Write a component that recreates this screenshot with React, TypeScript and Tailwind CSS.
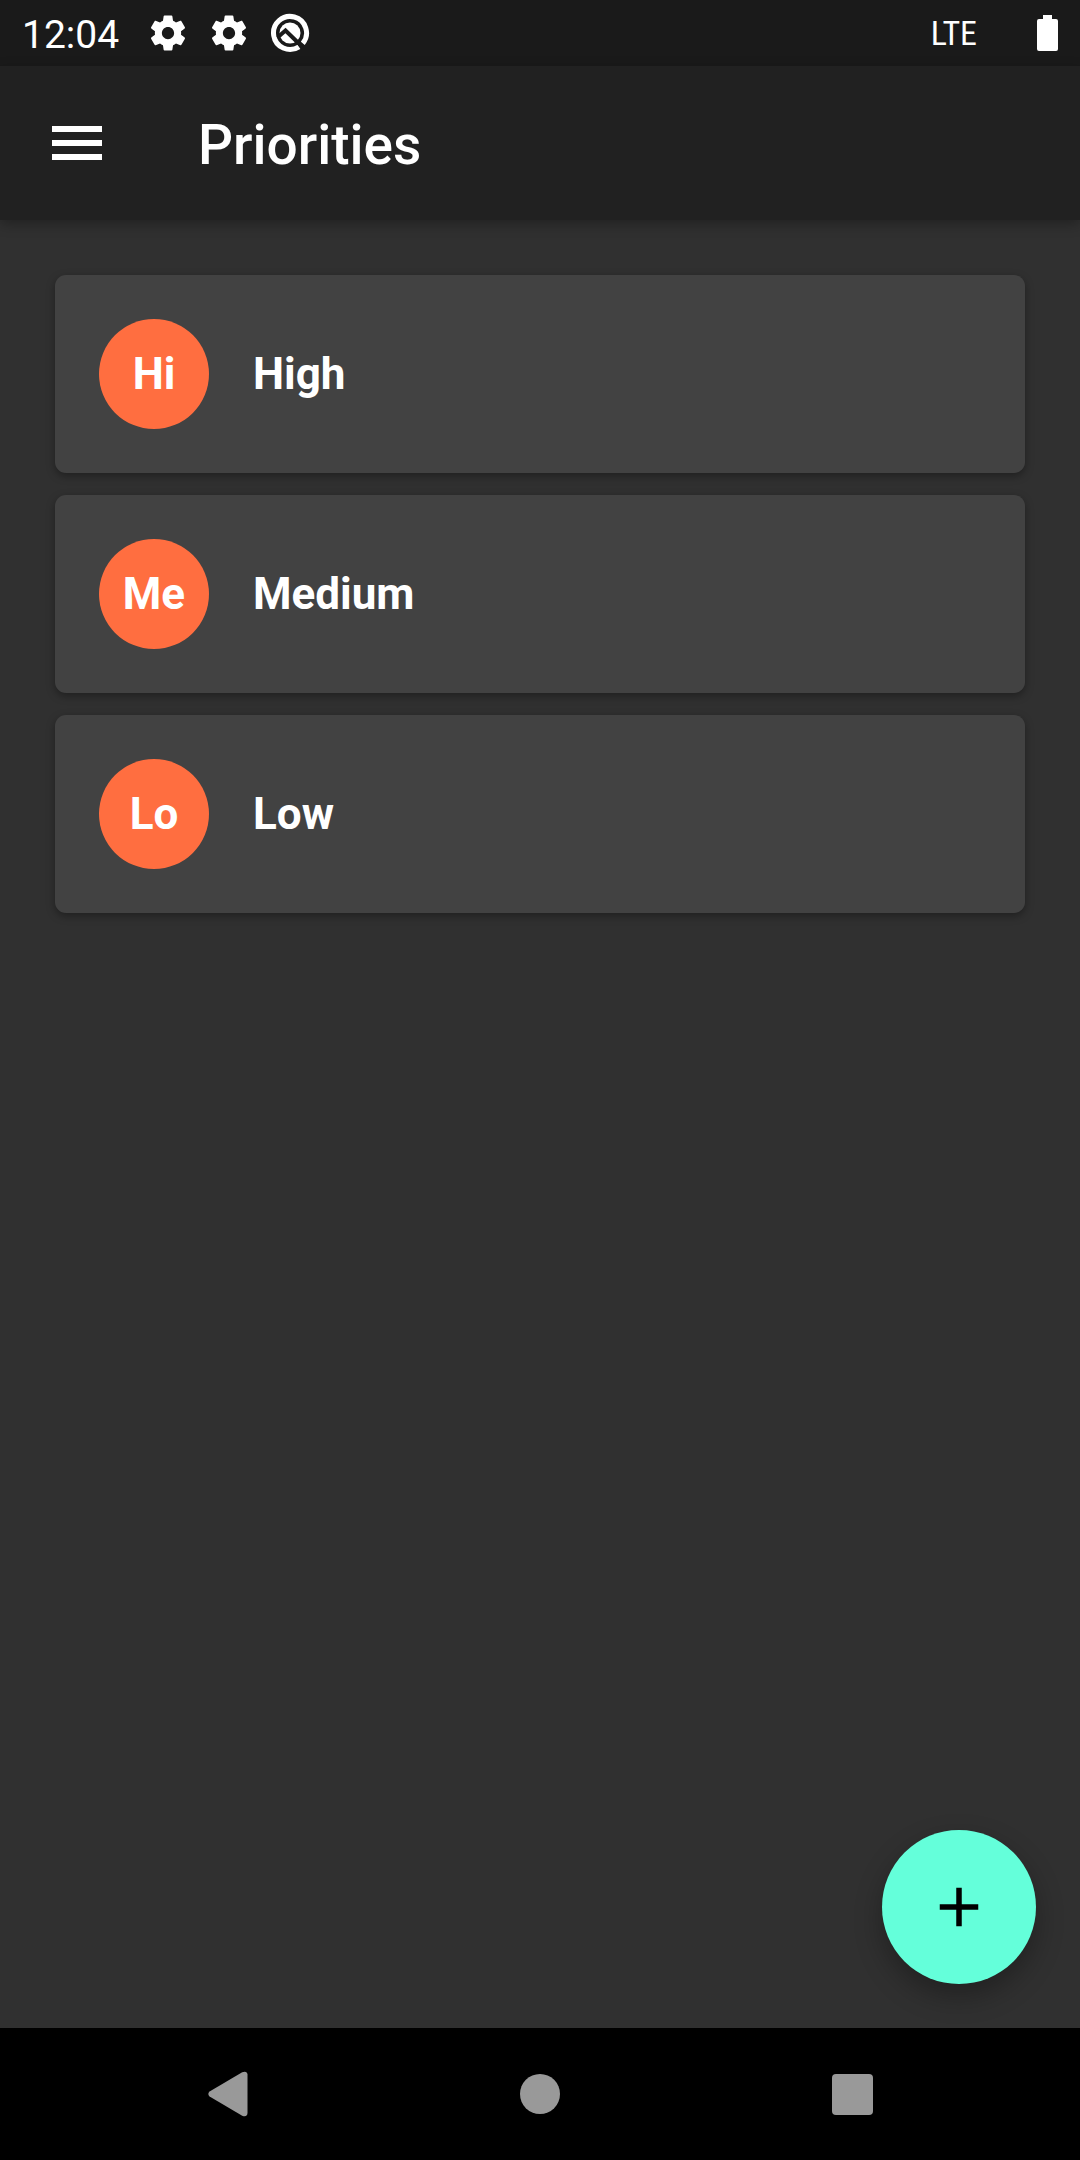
const GEAR =
  'M19.43 12.98c.04-.32.07-.64.07-.98s-.03-.66-.07-.98l2.11-1.65c.19-.15.24-.42.12-.64l-2-3.46c-.12-.22-.39-.3-.61-.22l-2.49 1c-.52-.4-1.08-.73-1.69-.98l-.38-2.65C14.46 2.18 14.25 2 14 2h-4c-.25 0-.46.18-.49.42l-.38 2.65c-.61.25-1.17.59-1.69.98l-2.49-1c-.23-.09-.49 0-.61.22l-2 3.46c-.13.22-.07.49.12.64l2.11 1.65c-.04.32-.07.65-.07.98s.03.66.07.98l-2.11 1.65c-.19.15-.24.42-.12.64l2 3.46c.12.22.39.3.61.22l2.49-1c.52.4 1.08.73 1.69.98l.38 2.65c.03.24.24.42.49.42h4c.25 0 .46-.18.49-.42l.38-2.65c.61-.25 1.17-.59 1.69-.98l2.49 1c.23.09.49 0 .61-.22l2-3.46c.12-.22.07-.49-.12-.64l-2.11-1.65zM12 15.5c-1.93 0-3.5-1.57-3.5-3.5s1.57-3.5 3.5-3.5 3.5 1.57 3.5 3.5-1.57 3.5-3.5 3.5z';

const priorities = [
  { short: 'Hi', name: 'High' },
  { short: 'Me', name: 'Medium' },
  { short: 'Lo', name: 'Low' },
];

function GearIcon() {
  return (
    <svg viewBox="0 0 24 24" className="size-[42px]" fill="currentColor" aria-hidden="true">
      <path d={GEAR} />
    </svg>
  );
}

function BadgeIcon() {
  return (
    <svg viewBox="0 0 42 42" className="size-[42px]" fill="none" aria-hidden="true">
      <path d="M30 34.8A16.5 16.5 0 1 1 33.8 31.4" stroke="currentColor" strokeWidth="5" />
      <circle cx="21" cy="21" r="10.5" fill="currentColor" />
      <path d="M8.5 25.5L16.5 18.5L34 35.5" stroke="#1a1a1a" strokeWidth="4" />
    </svg>
  );
}

function StatusBar() {
  return (
    <div className="flex h-[66px] shrink-0 items-center justify-between bg-[#1a1a1a] px-[22px]">
      <div className="flex items-center">
        <span className="w-[125px] pt-[3px] text-[39px] leading-[46px]">12:04</span>
        <div className="flex items-center gap-[19px]">
          <GearIcon />
          <GearIcon />
          <BadgeIcon />
        </div>
      </div>
      <div className="flex items-center gap-[60px]">
        <span className="font-['Roboto_Condensed','Liberation_Sans_Narrow',Roboto,sans-serif] text-[34px] leading-[40px]">
          LTE
        </span>
        <svg viewBox="0 0 21 36" className="h-[36px] w-[21px]" fill="currentColor" aria-hidden="true">
          <path d="M6 0h9v4h4a2 2 0 0 1 2 2v28a2 2 0 0 1-2 2H2a2 2 0 0 1-2-2V6a2 2 0 0 1 2-2h4z" />
        </svg>
      </div>
    </div>
  );
}

export default function App() {
  return (
    <div className="flex min-h-screen flex-col bg-[#303030] font-[Roboto,sans-serif] text-white">
      <StatusBar />
      <header className="flex h-[154px] shrink-0 items-center bg-[#212121] px-[44px] shadow-[0_4px_12px_rgba(0,0,0,0.3)]">
        <button type="button" aria-label="Open menu" className="flex size-[66px] items-center">
          <svg viewBox="0 0 66 66" className="size-[66px]" fill="currentColor" aria-hidden="true">
            <path d="M8 16h50v6H8zM8 30h50v6H8zM8 44h50v6H8z" />
          </svg>
        </button>
        <h1 className="ml-[88px] pt-[4px] text-[55px] leading-[64px] font-medium">Priorities</h1>
      </header>

      <main className="relative flex-1 p-[55px]">
        <ul className="flex flex-col gap-[22px]">
          {priorities.map((p) => (
            <li
              key={p.name}
              className="flex h-[198px] items-center gap-[44px] rounded-[11px] bg-[#424242] px-[44px] shadow-[0_3px_8px_rgba(0,0,0,0.35)]"
            >
              <span className="flex size-[110px] items-center justify-center rounded-full bg-[#ff6e40] text-[44px] leading-[52px] font-bold">
                {p.short}
              </span>
              <span className="text-[44px] leading-[52px] font-bold">{p.name}</span>
            </li>
          ))}
        </ul>
        <button
          type="button"
          aria-label="Add priority"
          className="absolute right-[44px] bottom-[44px] flex size-[154px] items-center justify-center rounded-full bg-[#64ffda] text-black shadow-[0_12px_28px_rgba(0,0,0,0.3)]"
        >
          <svg viewBox="0 0 24 24" className="size-[66px]" fill="currentColor" aria-hidden="true">
            <path d="M19 13h-6v6h-2v-6H5v-2h6V5h2v6h6v2z" />
          </svg>
        </button>
      </main>

      <nav className="grid h-[132px] shrink-0 grid-cols-3 place-items-center bg-black px-[72px] text-[#999999]">
        <button type="button" aria-label="Back">
          <svg viewBox="0 0 40 46" className="h-[46px] w-[40px]" fill="currentColor" aria-hidden="true">
            <path d="M1.6 20.6L34.2 1.3Q39 -0.5 39.5 3.5V42Q39 46.5 34.2 44.7L1.6 25.4Q-1 23 1.6 20.6z" />
          </svg>
        </button>
        <button type="button" aria-label="Home" className="size-[40px] rounded-full bg-[#999999]" />
        <button type="button" aria-label="Recent apps" className="size-[41px] rounded-[4px] bg-[#999999]" />
      </nav>
    </div>
  );
}
